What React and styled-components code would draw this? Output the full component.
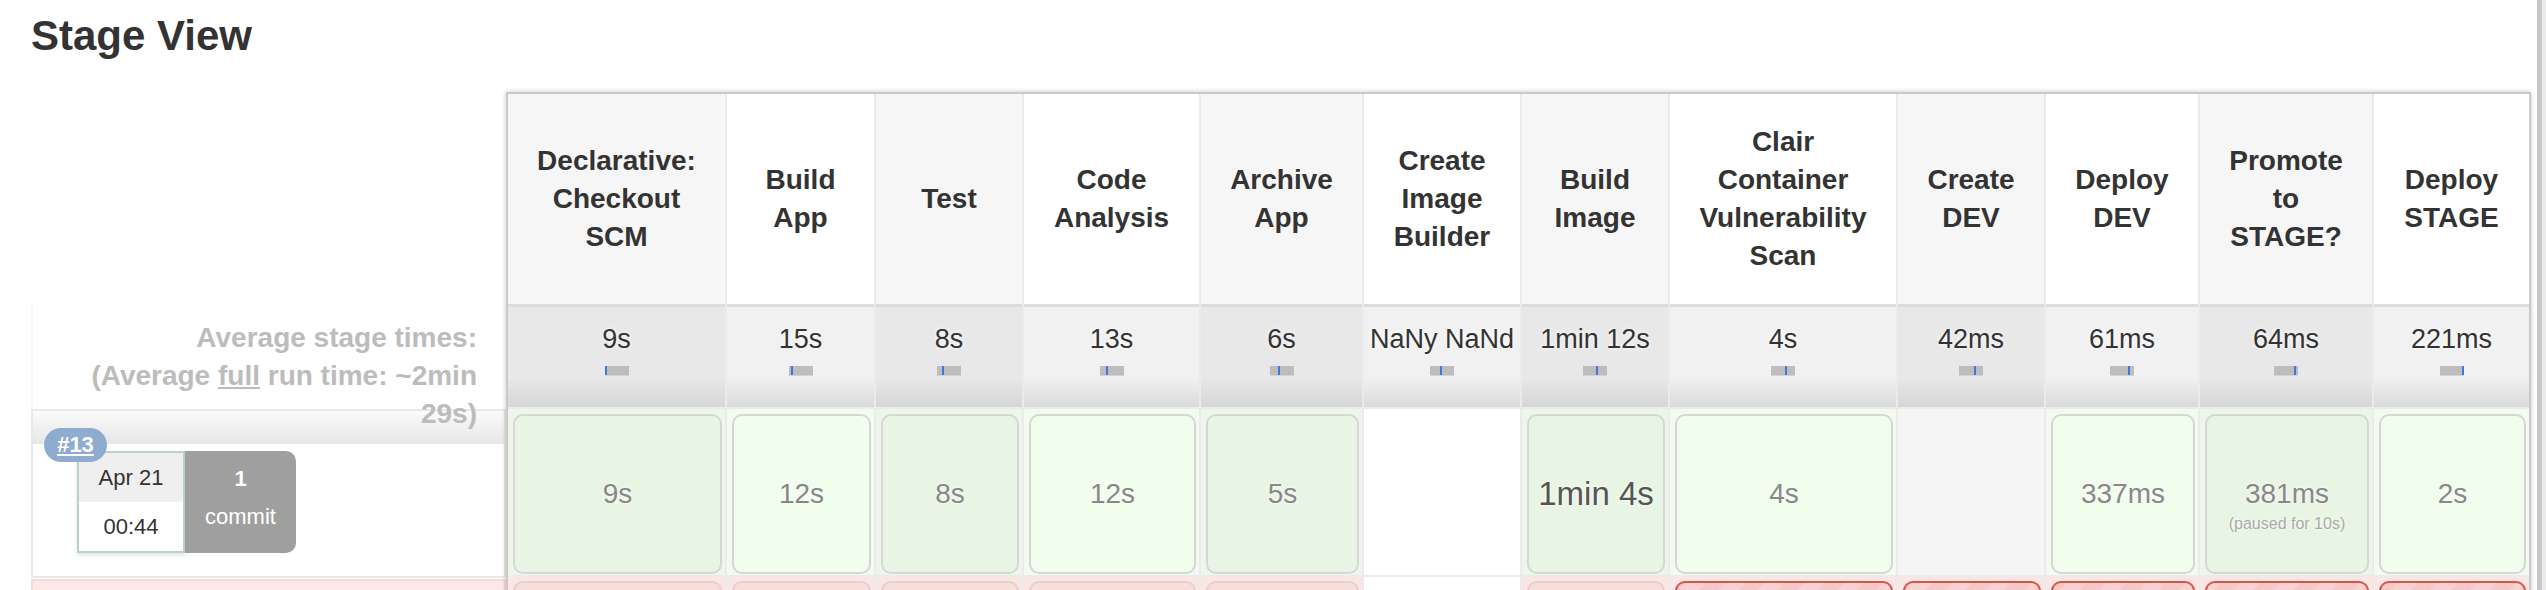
import React from "react";
import styled, { createGlobalStyle } from "styled-components";

const GlobalStyle = createGlobalStyle`
  html, body {
    margin: 0;
    padding: 0;
    background: #fff;
    overflow: hidden;
  }
  body {
    font-family: "Liberation Sans", Arial, sans-serif;
    color: #333;
  }
`;

const stages = [
  { name: "Declarative: Checkout SCM", w: 217, avg: "9s", mark: 0, build: "9s", next: "ok" },
  { name: "Build App", w: 147, avg: "15s", mark: 2, build: "12s", next: "ok" },
  { name: "Test", w: 146, avg: "8s", mark: 5, build: "8s", next: "ok" },
  { name: "Code Analysis", w: 175, avg: "13s", mark: 6, build: "12s", next: "ok" },
  { name: "Archive App", w: 161, avg: "6s", mark: 8, build: "5s", next: "ok" },
  { name: "Create Image Builder", w: 156, avg: "NaNy NaNd", mark: 10, empty: "white", next: "none" },
  { name: "Build Image", w: 146, avg: "1min 12s", mark: 13, build: "1min 4s", strong: true, next: "ok" },
  { name: "Clair Container Vulnerability Scan", w: 226, avg: "4s", mark: 14, build: "4s", next: "failed" },
  { name: "Create DEV", w: 146, avg: "42ms", mark: 15, empty: "gray", next: "failed" },
  { name: "Deploy DEV", w: 152, avg: "61ms", mark: 18, build: "337ms", next: "failed" },
  { name: "Promote to STAGE?", w: 172, avg: "64ms", mark: 20, build: "381ms", note: "(paused for 10s)", next: "failed" },
  { name: "Deploy STAGE", w: 155, avg: "221ms", mark: 22, build: "2s", next: "failed" },
];

const Page = styled.div`
  display: flex;
  width: 2546px;
  height: 590px;
  overflow: hidden;
`;

const Main = styled.main`
  flex: 1;
  min-width: 0;
  padding: 11px 0 0 31px;
`;

const ScrollTrack = styled.div`
  flex: none;
  width: 9px;
  box-sizing: border-box;
  border-left: 5px solid #c8c8c8;
  background: #ebebeb;
`;

const Title = styled.h2`
  margin: 0;
  font-size: 42px;
  line-height: 49px;
  font-weight: bold;
  color: #333;
`;

const StageView = styled.section`
  display: flex;
  align-items: flex-start;
  margin-top: 32px;
`;

const LeftCol = styled.div`
  flex: none;
  width: 475px;
  padding-top: 212px;
`;

const AvgLabel = styled.div`
  height: 105px;
  box-sizing: border-box;
  padding: 15px 29px 0 40px;
  border-left: 2px solid #f6f6f6;
  text-align: right;
  font-size: 28px;
  line-height: 38px;
  font-weight: bold;
  color: #bcbcbc;
  u {
    text-decoration: underline;
  }
`;

const RunBox = styled.div`
  height: 169px;
  box-sizing: border-box;
  border: 2px solid #e8e8e8;
  background: linear-gradient(to bottom, #fbfbfb 0, #e6e6e6 33px, #fff 33px);
`;

const NextRunBox = styled.div`
  height: 60px;
  margin-top: 1px;
  box-sizing: border-box;
  border: 2px solid #f3dcd9;
  background: #fce9e7;
`;

const RunInfo = styled.div`
  position: relative;
  display: flex;
  margin: 40px 0 0 44px;
`;

const Badge = styled.span`
  position: absolute;
  left: -33px;
  top: -23px;
  width: 63px;
  height: 34px;
  border-radius: 17px;
  background: #8eacd0;
  color: #fff;
  font-size: 22px;
  font-weight: bold;
  line-height: 34px;
  text-align: center;
  text-decoration: underline;
`;

const DateBox = styled.div`
  width: 108px;
  height: 102px;
  box-sizing: border-box;
  border: 2px solid #b7d3c3;
  display: grid;
  grid-template-rows: 1fr 1fr;
  box-shadow: 0 2px 4px rgba(0, 0, 0, 0.12);
  font-size: 22px;
  color: #333;
`;

const DatePart = styled.div`
  display: flex;
  align-items: center;
  justify-content: center;
  background: ${(p) => (p.$top ? "#efefef" : "#fff")};
`;

const CommitBox = styled.div`
  width: 111px;
  height: 102px;
  box-sizing: border-box;
  padding-bottom: 8px;
  border-radius: 0 10px 10px 0;
  background: #9f9f9f;
  color: #fff;
  display: flex;
  flex-direction: column;
  align-items: center;
  justify-content: center;
  font-size: 22px;
  line-height: 38px;
  b {
    font-weight: bold;
  }
`;

const Table = styled.div`
  flex: none;
  display: grid;
  grid-template-columns: ${(p) => p.$cols};
  grid-template-rows: 210px 102px 169px 60px;
  column-gap: 2px;
  row-gap: 0;
  border: 2px solid #c9c9c9;
  border-bottom: none;
  background: #ebebeb;
  box-shadow: 0 0 5px rgba(0, 0, 0, 0.22);
`;

const HeaderCell = styled.div`
  display: flex;
  align-items: center;
  justify-content: center;
  padding: 0 20px;
  text-align: center;
  font-size: 28px;
  line-height: 38px;
  font-weight: bold;
  color: #333;
  background: ${(p) => (p.$odd ? "#fff" : "#f6f6f6")};
`;

const AvgCell = styled.div`
  display: flex;
  flex-direction: column;
  align-items: center;
  box-sizing: border-box;
  padding-top: 16px;
  border-top: 3px solid #dcdcdc;
  margin-bottom: -1px;
  font-size: 27px;
  line-height: 32px;
  color: #333;
  white-space: nowrap;
  text-shadow: 0 0 4px #fff;
  background: ${(p) =>
    p.$odd
      ? "linear-gradient(to bottom, #f1f1f1 70%, #dadada 100%)"
      : "linear-gradient(to bottom, #e8e8e8 70%, #d6d6d6 100%)"};
`;

const Bar = styled.div`
  position: relative;
  width: 24px;
  height: 9px;
  margin-top: 11px;
  background: #bdbdbd;
  border-bottom: 1px solid #d2d2d2;
`;

const BarMark = styled.span`
  position: absolute;
  top: 0;
  width: 2px;
  height: 9px;
  background: #3d7ad6;
`;

const BuildCell = styled.div`
  margin-top: 3px;
  padding: 5px 3px 1px 5px;
  box-sizing: border-box;
  display: flex;
  background: ${(p) =>
    p.$empty === "white" ? "#fff" : p.$empty === "gray" ? "#f5f5f5" : p.$odd ? "#f3fbf1" : "#eef6ec"};
`;

const StageBox = styled.div`
  flex: 1;
  display: grid;
  grid-template-rows: 1fr auto 1fr;
  justify-items: center;
  border: 2px solid #d6d6d6;
  border-radius: 10px;
  background: ${(p) => (p.$odd ? "#f1fded" : "#e9f5e4")};
  color: ${(p) => (p.$strong ? "#555" : "#888")};
  font-size: ${(p) => (p.$strong ? "33px" : "28px")};
  line-height: 36px;
  text-shadow: 0 0 3px #fff;
`;

const Duration = styled.div`
  grid-row: 2;
`;

const Note = styled.div`
  grid-row: 3;
  margin-top: 2px;
  font-size: 16px;
  line-height: 20px;
  color: #aaa;
`;

const NextCell = styled.div`
  margin-top: 2px;
  padding: 4px 3px 0 5px;
  display: flex;
  background: ${(p) => (p.$kind === "none" ? "#fff" : "#fbe6e4")};
`;

const NextBox = styled.div`
  flex: 1;
  border: 2px solid ${(p) => (p.$kind === "failed" ? "#d2564e" : "#e6cfcc")};
  border-bottom: none;
  border-radius: 10px 10px 0 0;
  background: ${(p) =>
    p.$kind === "failed"
      ? "repeating-linear-gradient(-45deg, #f8d2ce 0 14px, #f5c8c3 14px 28px)"
      : "#f8dedb"};
`;

export default function App() {
  const cols = stages.map((s) => `${s.w}px`).join(" ");
  return (
    <>
      <GlobalStyle />
      <Page>
        <Main>
          <Title>Stage View</Title>
          <StageView>
            <LeftCol>
              <AvgLabel>
                Average stage times:
                <br />
                (Average <u>full</u> run time: ~2min 29s)
              </AvgLabel>
              <RunBox>
                <RunInfo>
                  <Badge>#13</Badge>
                  <DateBox>
                    <DatePart $top>Apr 21</DatePart>
                    <DatePart>00:44</DatePart>
                  </DateBox>
                  <CommitBox>
                    <b>1</b>
                    <span>commit</span>
                  </CommitBox>
                </RunInfo>
              </RunBox>
              <NextRunBox />
            </LeftCol>
            <Table $cols={cols}>
              {stages.map((s, i) => (
                <HeaderCell key={`h-${i}`} $odd={i % 2 === 1}>
                  {s.name}
                </HeaderCell>
              ))}
              {stages.map((s, i) => (
                <AvgCell key={`a-${i}`} $odd={i % 2 === 1}>
                  <span>{s.avg}</span>
                  <Bar>
                    <BarMark style={{ left: `${s.mark}px` }} />
                  </Bar>
                </AvgCell>
              ))}
              {stages.map((s, i) => (
                <BuildCell key={`b-${i}`} $odd={i % 2 === 1} $empty={s.empty}>
                  {s.build && (
                    <StageBox $odd={i % 2 === 1} $strong={s.strong}>
                      <Duration>{s.build}</Duration>
                      {s.note && <Note>{s.note}</Note>}
                    </StageBox>
                  )}
                </BuildCell>
              ))}
              {stages.map((s, i) => (
                <NextCell key={`n-${i}`} $kind={s.next}>
                  {s.next !== "none" && <NextBox $kind={s.next} />}
                </NextCell>
              ))}
            </Table>
          </StageView>
        </Main>
        <ScrollTrack />
      </Page>
    </>
  );
}
